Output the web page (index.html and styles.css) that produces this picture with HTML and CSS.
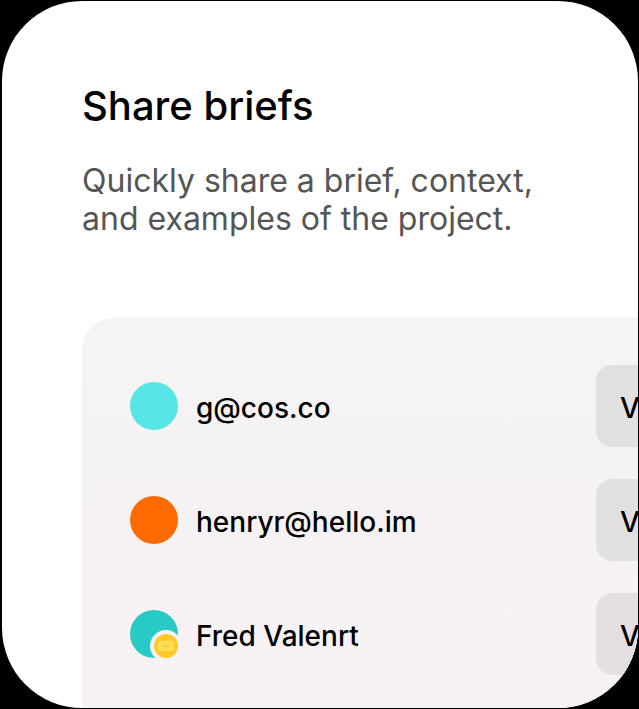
FILE: index.html
```html
<!DOCTYPE html>
<html lang="en">
<head>
<meta charset="utf-8">
<meta name="viewport" content="width=device-width, initial-scale=1">
<title>Share briefs</title>
<link rel="stylesheet" href="styles.css">
</head>
<body>
<main class="card">
  <header class="intro">
    <h1 class="title">Share briefs</h1>
    <p class="lead">Quickly share a brief, context,<br>and examples of the project.</p>
  </header>
  <ul class="panel">
    <li class="person">
      <span class="avatar avatar-aqua"></span>
      <span class="name">g@cos.co</span>
      <button class="role" type="button">View</button>
    </li>
    <li class="person">
      <span class="avatar avatar-orange"></span>
      <span class="name">henryr@hello.im</span>
      <button class="role" type="button">View</button>
    </li>
    <li class="person">
      <svg class="avatar" viewBox="0 0 48 48" aria-hidden="true">
        <circle cx="24" cy="24" r="24" fill="#27cac5"/>
        <circle cx="36" cy="36" r="16" fill="#f7f2f3"/>
        <circle cx="36" cy="36" r="12" fill="#ffca28"/>
        <rect x="28.5" y="31.5" width="15" height="9" rx="3" fill="#ffdc4e" stroke="#ffe473"/>
        <rect x="31.5" y="34" width="9" height="4" rx="2" fill="#ffd23c" stroke="#ffe473" stroke-width=".7"/>
      </svg>
      <span class="name">Fred Valenrt</span>
      <button class="role" type="button">View</button>
    </li>
  </ul>
</main>
</body>
</html>
```
FILE: styles.css
```css
* {
  box-sizing: border-box;
}

body {
  display: flex;
  min-height: 100vh;
  margin: 0;
  padding: 1px 1px 1px 2px;
  background: #000;
  color: #000;
  font-family: Inter, sans-serif;
}

.card {
  display: flex;
  flex: 1;
  flex-direction: column;
  min-width: 0;
  padding: 81px 0 0 80px;
  overflow: hidden;
  border-radius: 80px;
  background: #fff;
}

.title {
  margin: 0 0 32px;
  font-size: 40px;
  font-weight: 500;
  line-height: 48px;
}

.lead {
  margin: 0;
  color: #555;
  font-size: 32px;
  font-weight: 400;
  line-height: 38px;
}

.intro {
  margin-bottom: 80px;
}

.panel {
  display: flex;
  flex: 1;
  flex-direction: column;
  gap: 32px;
  margin: 0;
  padding: 47px 0 32px 48px;
  border-top-left-radius: 32px;
  background: linear-gradient(#f5f3f4, #f7f1f3);
  list-style: none;
}

.person {
  display: grid;
  grid-template-columns: 48px 1fr 42px;
  column-gap: 18px;
  align-items: center;
}

.avatar {
  display: block;
  width: 48px;
  height: 48px;
  border-radius: 50%;
}

svg.avatar {
  border-radius: 0;
}

.avatar-aqua {
  background: #57e5e5;
}

.avatar-orange {
  background: #ff6b00;
}

.name,
.role {
  padding-top: 4px;
  font-size: 28px;
  font-weight: 500;
  line-height: 34px;
}

.role {
  width: 160px;
  height: 82px;
  padding-right: 24px;
  padding-bottom: 0;
  padding-left: 24px;
  border: 0;
  border-radius: 16px;
  background: #e2dfe0;
  color: #000;
  font-family: inherit;
  text-align: left;
}

.person:last-child .role {
  background: #e6dfe1;
}
```
